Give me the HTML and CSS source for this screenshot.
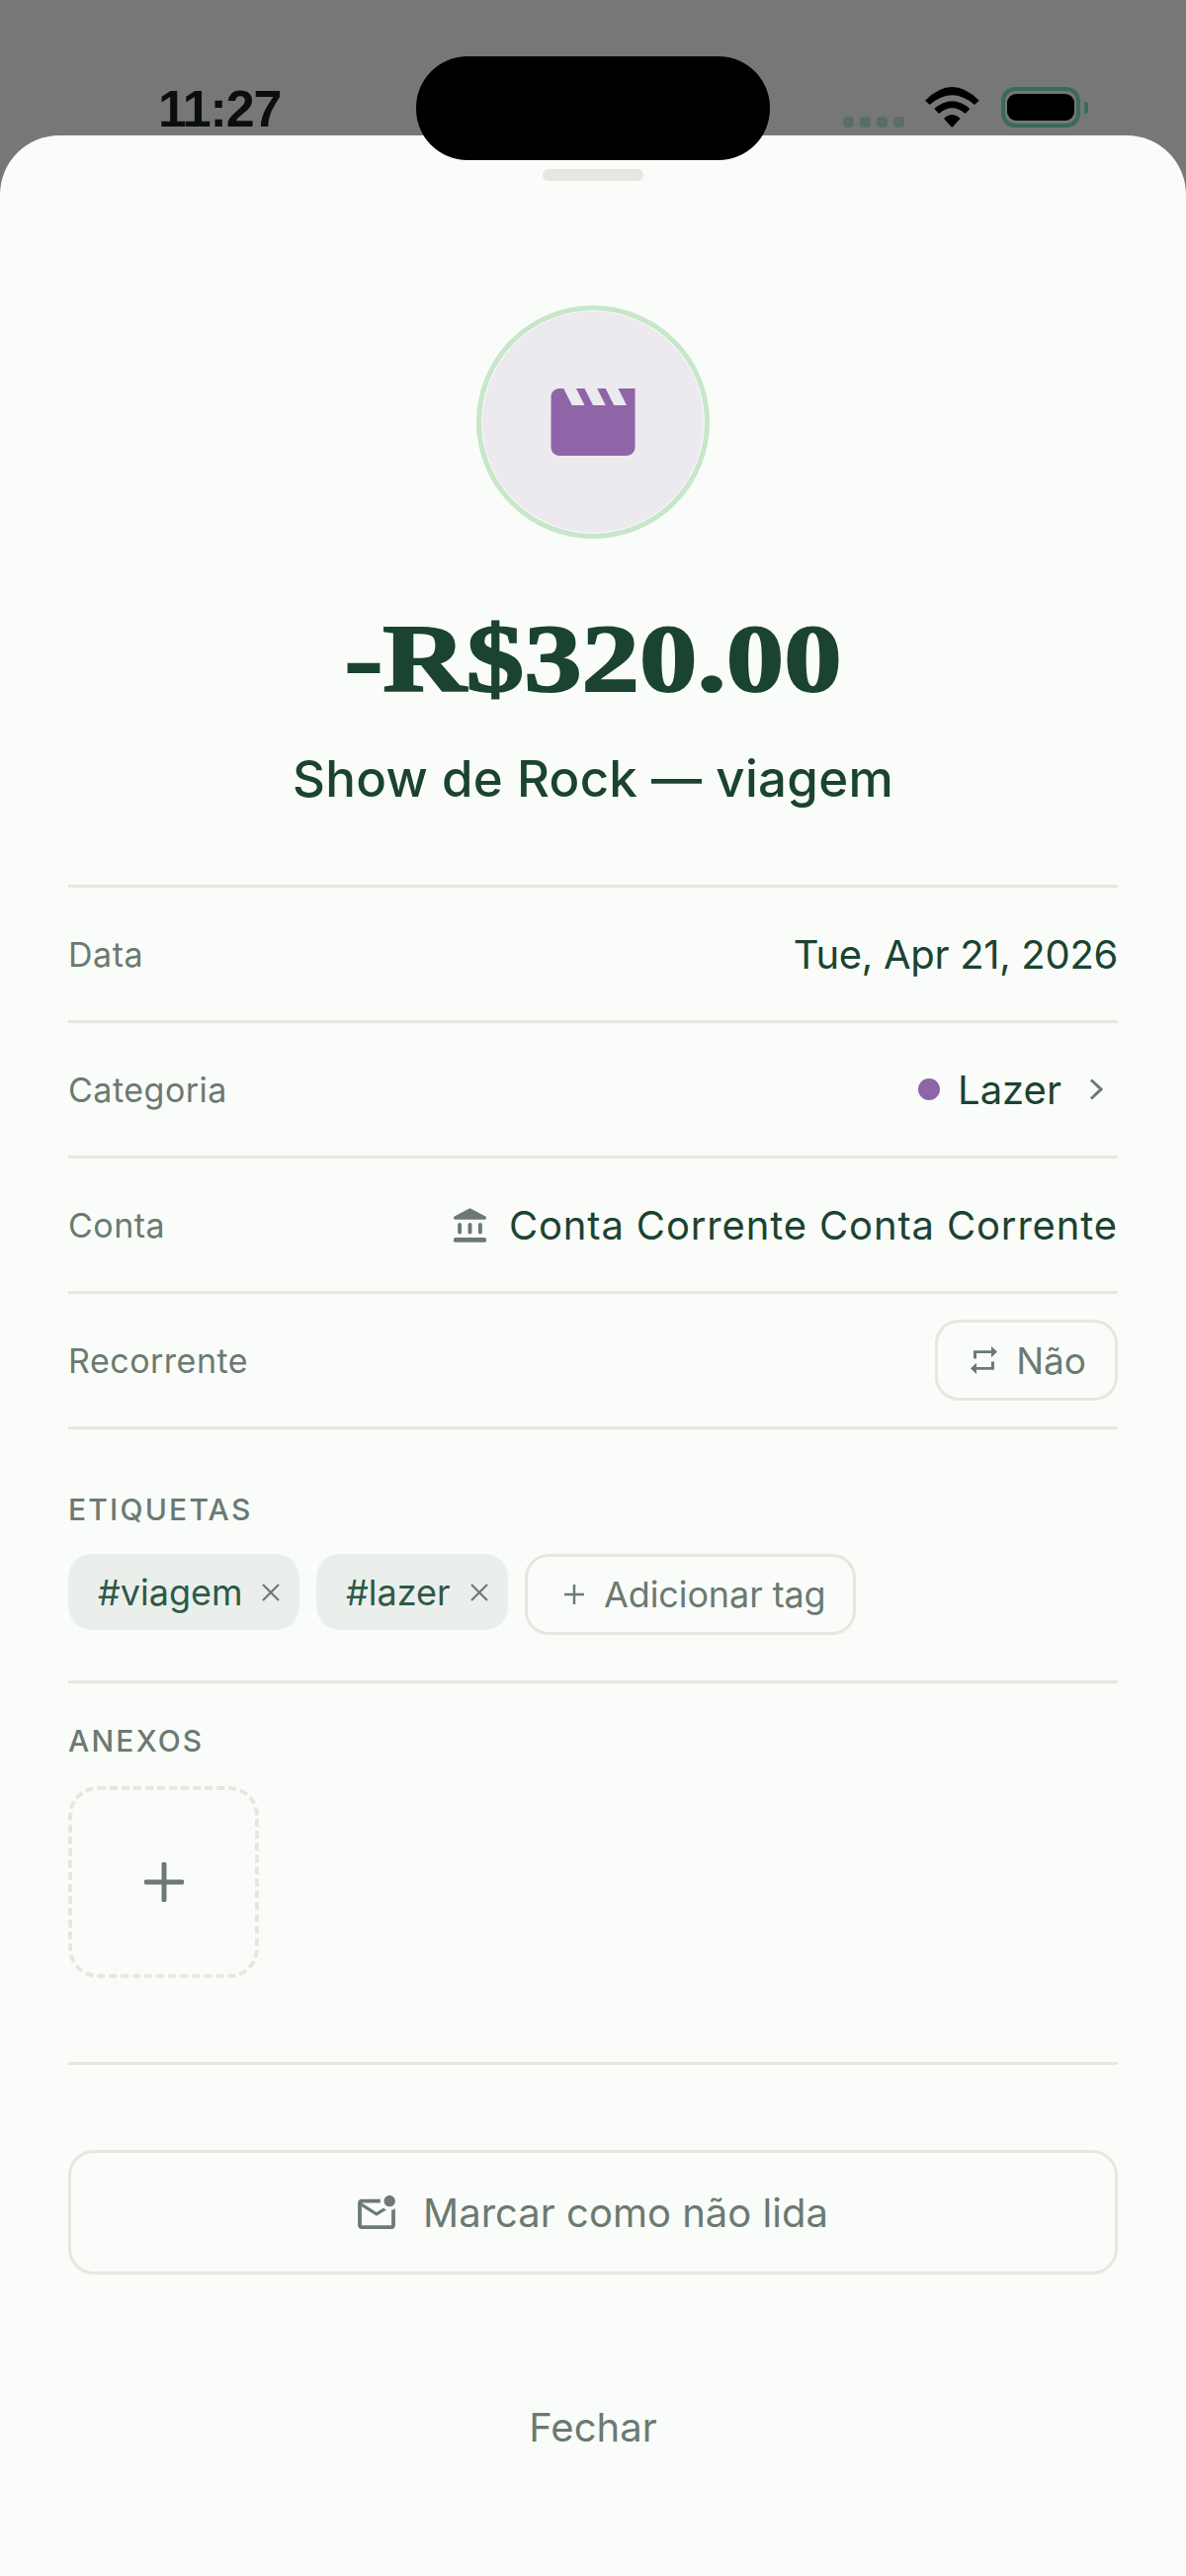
FILE: index.html
```html
<!DOCTYPE html>
<html lang="pt-br">

<head>
  <meta charset="UTF-8" />
  <title>Detalhes da transação</title>
  <link rel="stylesheet" href="styles.css">
</head>

<body>
  <div class="screen">
    <div class="status-bar">
      <span class="time">11:27</span>
      <div class="status-icons">
        <div class="signal"><i></i><i></i><i></i><i></i></div>
        <svg class="wifi" viewBox="0 0 55 41">
          <path d="M0 13.700 Q27.300 -13.700 54.700 13.700 L50 18 Q27.300 -1.400 4.700 18Z" />
          <path d="M9.300 22 Q27.300 6.600 45.300 22 L40.700 27 Q27.300 15.600 14 27Z" />
          <path d="M19 32 Q27.300 24 35.600 32 L27.300 41Z" />
        </svg>
        <div class="battery"><span class="battery-fill"></span></div>
        <span class="battery-tip"></span>
      </div>
    </div>
    <div class="island"></div>

    <div class="sheet">
      <div class="handle"></div>

      <div class="avatar">
        <svg class="avatar-icon" viewBox="0 0 24 24">
          <path d="M18 4l2 4h-3l-2-4h-2l2 4h-3l-2-4H8l2 4H7L5 4H4c-1.100 0-1.990.9-1.990 2L2 18c0 1.100.9 2 2 2h16c1.100 0 2-.9 2-2V4h-4z" />
        </svg>
      </div>
      <h1 class="amount">-R$320.00</h1>
      <h2 class="title">Show de Rock — viagem</h2>

      <div class="details">
        <div class="row">
          <span class="label">Data</span>
          <span class="value value-date">Tue, Apr 21, 2026</span>
        </div>
        <div class="row">
          <span class="label">Categoria</span>
          <span class="value">
            <span class="dot"></span>
            Lazer
            <svg class="chevron" viewBox="0 0 14 22">
              <path d="M2 1.500 L12 11 L2 20.500" />
            </svg>
          </span>
        </div>
        <div class="row">
          <span class="label">Conta</span>
          <span class="value value-account">
            <svg class="bank" viewBox="2 1 20 21">
              <path d="M12 1 L21.500 6 Q22 6.300 22 7 V7.300 Q22 8 21.200 8 H2.800 Q2 8 2 7.300 V7 Q2 6.300 2.500 6Z" />
              <rect x="4.500" y="10" width="2.400" height="7" rx="1.200" />
              <rect x="10.800" y="10" width="2.400" height="7" rx="1.200" />
              <rect x="17.100" y="10" width="2.400" height="7" rx="1.200" />
              <rect x="2" y="19" width="20" height="3" rx="1" />
            </svg>
            Conta Corrente Conta Corrente
          </span>
        </div>
        <div class="row">
          <span class="label">Recorrente</span>
          <span class="chip-repeat">
            <svg class="repeat" viewBox="3 2 18 20" preserveAspectRatio="none">
              <path d="M7 7h10v3l4-4-4-4v3H5v6h2V7zm10 10H7v-3l-4 4 4 4v-3h12v-6h-2v4z" />
            </svg>
            Não
          </span>
        </div>
      </div>

      <section class="tags">
        <h3 class="section-title">ETIQUETAS</h3>
        <div class="tag-list">
          <span class="tag tag-viagem">#viagem
            <svg class="close" viewBox="0 0 20 20">
              <path d="M2 2 L18 18 M18 2 L2 18" />
            </svg>
          </span>
          <span class="tag tag-lazer">#lazer
            <svg class="close" viewBox="0 0 20 20">
              <path d="M2 2 L18 18 M18 2 L2 18" />
            </svg>
          </span>
          <span class="tag-add">
            <svg class="plus-small" viewBox="0 0 22 22">
              <path d="M11 1 V21 M1 11 H21" />
            </svg>
            Adicionar tag
          </span>
        </div>
      </section>

      <section class="attachments">
        <h3 class="section-title">ANEXOS</h3>
        <div class="attach-add">
          <svg class="plus-big" viewBox="0 0 40 40">
            <path d="M20 2 V38 M2 20 H38" />
          </svg>
        </div>
      </section>

      <button class="btn-unread" type="button">
        <svg class="unread-icon" viewBox="2 2 20 18">
          <path d="M22 8.980V18c0 1.100-.9 2-2 2H4c-1.100 0-2-.9-2-2V6c0-1.100.9-2 2-2h10.100c-.06.320-.1.660-.1 1s.04.680.1 1H4l8 5 3.670-2.290c.470.430 1.020.760 1.630.980L12 13 4 8v10h16V9.900c.740-.150 1.420-.480 2-.920zM16 5c0 1.660 1.340 3 3 3s3-1.340 3-3-1.340-3-3-3-3 1.340-3 3z" />
        </svg>
        Marcar como não lida
      </button>

      <button class="btn-close" type="button">Fechar</button>
    </div>
  </div>
</body>

</html>
```

FILE: styles.css
```css
* {
  margin: 0;
  padding: 0;
  box-sizing: border-box;
  font-family: 'Inter', sans-serif;
}

body {
  background: #777;
}

.screen {
  position: relative;
  display: flex;
  flex-direction: column;
  width: 1200px;
  height: 2606px;
  overflow: hidden;
  background: #777;
}

/* status bar */
.status-bar {
  display: flex;
  justify-content: space-between;
  align-items: flex-start;
  height: 137px;
  padding: 88px 99px 0 160px;
}

.time {
  font-family: 'Liberation Sans', sans-serif;
  font-size: 52px;
  font-weight: 700;
  letter-spacing: -1.200px;
  line-height: 44px;
  color: #0a0f0c;
}

.status-icons {
  display: flex;
  align-items: flex-end;
  height: 41px;
}

.signal {
  display: flex;
  gap: 6px;
  margin-right: 21px;
}

.signal i {
  width: 11px;
  height: 11px;
  border-radius: 4px;
  background: #5a6e64;
}

.wifi {
  width: 55px;
  height: 41px;
  margin-right: 22px;
  fill: #000;
}

.battery {
  display: flex;
  align-items: center;
  justify-content: center;
  width: 80px;
  height: 41px;
  border: 4px solid #3a6b55;
  border-radius: 14px;
}

.battery-fill {
  width: 68px;
  height: 27px;
  border-radius: 9px;
  background: #000;
}

.battery-tip {
  width: 4px;
  height: 12px;
  margin: 0 0 14px 4px;
  border-radius: 0 3px 3px 0;
  background: #3a6b55;
}

.island {
  position: absolute;
  top: 57px;
  left: 421px;
  width: 358px;
  height: 105px;
  border-radius: 52px;
  background: #000;
}

/* sheet */
.sheet {
  flex: 1;
  display: flex;
  flex-direction: column;
  padding: 34px 69px 0;
  background: #fafcf9;
  border-radius: 60px 60px 0 0;
}

.handle {
  align-self: center;
  width: 102px;
  height: 12px;
  border-radius: 6px;
  background: #e8e6e1;
}

.avatar {
  align-self: center;
  display: flex;
  align-items: center;
  justify-content: center;
  width: 236px;
  height: 236px;
  margin-top: 126px;
  border: 5px solid #c8e6c9;
  border-radius: 50%;
  background: #ece9ef;
  box-shadow: inset 0 0 0 1px #fafcf9;
}

.avatar-icon {
  width: 102px;
  height: 102px;
  fill: #8e65a6;
}

.amount {
  margin-top: 67px;
  font-family: 'Liberation Serif', serif;
  font-size: 97px;
  font-weight: 700;
  line-height: 110px;
  text-align: center;
  color: #1b4332;
  -webkit-text-stroke: 2px #1b4332;
  transform: scaleX(1.205);
}

.title {
  margin-top: 32px;
  font-size: 51px;
  font-weight: 500;
  letter-spacing: 0.300px;
  line-height: 68px;
  text-align: center;
  color: #1b4332;
}

/* rows */
.details {
  margin-top: 73px;
  border-top: 3px solid #e8e6e1;
}

.row {
  display: flex;
  justify-content: space-between;
  align-items: center;
  height: 137px;
  border-bottom: 3px solid #e8e6e1;
}

.label {
  font-size: 34px;
  letter-spacing: 0.500px;
  color: #6b7a72;
}

.value {
  display: flex;
  align-items: center;
  font-size: 40px;
  color: #1b4332;
}

.value-date {
  letter-spacing: -0.300px;
}

.value-account {
  letter-spacing: 0.850px;
}

.dot {
  width: 22px;
  height: 22px;
  margin-right: 18px;
  border-radius: 50%;
  background: #8e65a6;
}

.chevron {
  width: 14px;
  height: 22px;
  margin: 0 15px 0 28px;
  fill: none;
  stroke: #6b7a72;
  stroke-width: 3;
}

.bank {
  width: 33px;
  height: 35px;
  margin-right: 23px;
  fill: #6b7a72;
}

.chip-repeat {
  display: flex;
  align-items: center;
  gap: 19px;
  height: 82px;
  padding: 0 29px 0 33px;
  border: 3px solid #e8e6e1;
  border-radius: 24px;
  font-size: 37px;
  color: #6b7a72;
}

.repeat {
  width: 27px;
  height: 28px;
  fill: #6b7a72;
}

/* tags and attachments */
.section-title {
  font-size: 30px;
  font-weight: 500;
  letter-spacing: 2.200px;
  line-height: 36px;
  color: #6b7a72;
}

.tags {
  padding: 63px 0 46px;
  border-bottom: 3px solid #e8e6e1;
}

.tag-list {
  display: flex;
  align-items: flex-start;
  gap: 17px;
  margin-top: 27px;
}

.tag {
  display: flex;
  align-items: center;
  justify-content: space-between;
  height: 77px;
  padding: 0 19px 0 30px;
  border-radius: 24px;
  background: #ebefec;
  font-size: 36px;
  color: #2d5a47;
}

.tag-viagem {
  width: 234px;
}

.tag-lazer {
  width: 194px;
}

.close {
  width: 20px;
  height: 20px;
  fill: none;
  stroke: #6b7a72;
  stroke-width: 2.200;
}

.tag-add {
  display: flex;
  align-items: center;
  gap: 19px;
  height: 82px;
  padding: 0 27px 0 36px;
  border: 3px solid #e8e6e1;
  border-radius: 24px;
  font-size: 36px;
  letter-spacing: -0.100px;
  color: #6b7a72;
}

.plus-small {
  width: 22px;
  height: 22px;
  fill: none;
  stroke: #6b7a72;
  stroke-width: 2.500;
}

.attachments {
  padding: 40px 0 85px;
  border-bottom: 3px solid #e8e6e1;
}

.attach-add {
  display: flex;
  align-items: center;
  justify-content: center;
  width: 193px;
  height: 194px;
  margin-top: 28px;
  border: 4px dashed #e8e6e1;
  border-radius: 30px;
}

.plus-big {
  width: 40px;
  height: 40px;
  fill: none;
  stroke: #6b7a72;
  stroke-width: 5;
  stroke-linecap: round;
}

/* buttons */
.btn-unread {
  display: flex;
  align-items: center;
  justify-content: center;
  gap: 28px;
  height: 126px;
  margin-top: 86px;
  border: 3px solid #e8e6e1;
  border-radius: 26px;
  background: transparent;
  font-size: 40px;
  color: #6b7a72;
}

.unread-icon {
  width: 38px;
  height: 34px;
  fill: #6b7a72;
}

.btn-close {
  align-self: center;
  margin-top: 125px;
  border: none;
  background: transparent;
  font-size: 40px;
  line-height: 60px;
  color: #6b7a72;
}
```
